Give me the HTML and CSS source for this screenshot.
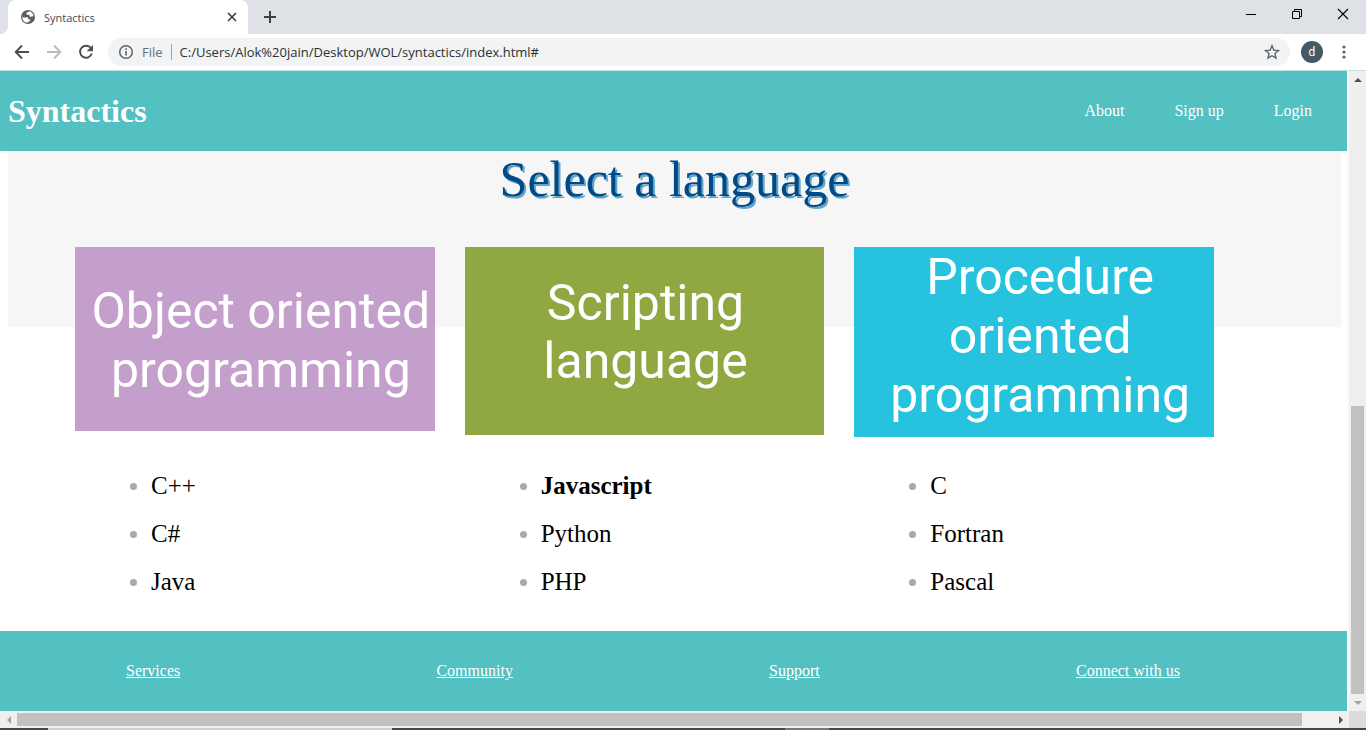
FILE: index.html
```html
<!DOCTYPE html>
<html lang="en">
<head>
<meta charset="utf-8">
<title>Syntactics</title>
<link rel="stylesheet" href="styles.css">
</head>
<body>
<div class="tab-strip">
  <div class="tab-edge"></div>
  <div class="tab">
    <svg class="favicon" viewBox="0 0 16 16" width="16" height="16" aria-hidden="true"><circle cx="8" cy="8" r="7" fill="#5b5f63"/><path d="M2.300 8.200c1.500-.3 2.600.6 4 .2 1.300-.3 2 .3 1.800 1.200-.2.900.9.700 1.700.9 1.200.4.500 1.500-.5 1.700-1 .2-.8 1.300-1.800 1.400C4.500 13.500 2.300 11.300 2.300 8.200zM9.300 2.300c-.9.700-1.300 1-2.300 1.300-1 .4-.7 1.500-.1 1.900.9.600 1.500-.5 2.200.1.700.7-.2 1.700 1.100 2.100 1.200.3 1.800-.6 3.500-.3C13.400 4.700 11.800 2.800 9.300 2.300z" fill="#fff"/></svg>
    <span class="tab-title">Syntactics</span>
    <button class="icon-button tab-close" aria-label="Close tab"><svg viewBox="0 0 16 16" width="16" height="16"><path d="M4 4l8 8M12 4l-8 8" stroke="#3c4043" stroke-width="1.700" fill="none"/></svg></button>
  </div>
  <button class="icon-button new-tab" aria-label="New tab"><svg viewBox="0 0 16 16" width="16" height="16"><path d="M8 2v12M2 8h12" stroke="#3c4043" stroke-width="2" fill="none"/></svg></button>
  <div class="window-controls">
    <button class="icon-button" aria-label="Minimize"><svg viewBox="0 0 12 12" width="12" height="12"><path d="M1 6.500h10" stroke="#000" fill="none"/></svg></button>
    <button class="icon-button" aria-label="Restore"><svg viewBox="0 0 12 12" width="12" height="12"><path d="M1.500 3.500h7v7h-7zM3.500 3.500v-2h7v7h-2" stroke="#000" fill="none"/></svg></button>
    <button class="icon-button" aria-label="Close"><svg viewBox="0 0 12 12" width="12" height="12"><path d="M1 1l10 10M11 1L1 11" stroke="#000" stroke-width="1.100" fill="none"/></svg></button>
  </div>
</div>
<div class="toolbar">
  <button class="icon-button" aria-label="Back"><svg viewBox="0 0 16 16" width="16" height="16"><path d="M15 8H2M8 1.500L1.700 8 8 14.500" stroke="#4a4e51" stroke-width="1.900" fill="none"/></svg></button>
  <button class="icon-button" aria-label="Forward"><svg viewBox="0 0 16 16" width="16" height="16"><path d="M1 8h13M8 1.500L14.300 8 8 14.500" stroke="#babcbe" stroke-width="1.900" fill="none"/></svg></button>
  <button class="icon-button" aria-label="Reload"><svg viewBox="0 0 16 16" width="16" height="16"><path d="M13 4.300A6 6 0 1 0 13.800 9.500" stroke="#4a4e51" stroke-width="1.900" fill="none"/><path d="M15 1v6.300H8.700z" fill="#4a4e51"/></svg></button>
  <div class="omnibox">
    <svg viewBox="0 0 16 16" width="16" height="16" aria-hidden="true"><circle cx="8" cy="8" r="6.300" stroke="#5f6368" stroke-width="1.500" fill="none"/><path d="M8 7v4.500M8 4.300v1.700" stroke="#5f6368" stroke-width="1.600"/></svg>
    <label class="scheme" for="address">File</label>
    <input class="address" id="address" type="text" value="C:/Users/Alok%20jain/Desktop/WOL/syntactics/index.html#">
    <button class="icon-button" aria-label="Bookmark"><svg viewBox="0 0 16 16" width="16" height="16"><path d="M8 1.800l1.800 4.300 4.700.4-3.600 3 1.100 4.600L8 11.700l-4 2.400 1.100-4.600-3.600-3 4.700-.4z" stroke="#5f6368" stroke-width="1.400" fill="none"/></svg></button>
  </div>
  <button class="avatar" aria-label="Profile d">d</button>
  <button class="icon-button" aria-label="Menu"><svg viewBox="0 0 16 16" width="16" height="16"><g fill="#5f6368"><circle cx="8" cy="3" r="1.600"/><circle cx="8" cy="8" r="1.600"/><circle cx="8" cy="13" r="1.600"/></g></svg></button>
</div>
<div class="viewport">
  <div class="page">
    <header class="site-header">
      <h1 class="brand">Syntactics</h1>
      <nav class="site-nav">
        <a href="#">About</a>
        <a href="#">Sign up</a>
        <a href="#">Login</a>
      </nav>
    </header>
    <main class="content">
      <h2 class="title">Select a language</h2>
      <div class="languages">
        <div class="card card-object">Object oriented programming</div>
        <div class="card card-script">Scripting<br>language</div>
        <div class="card card-procedure">Procedure oriented programming</div>
        <ul class="list"><li>C++</li><li>C#</li><li>Java</li></ul>
        <ul class="list"><li><b>Javascript</b></li><li>Python</li><li>PHP</li></ul>
        <ul class="list"><li>C</li><li>Fortran</li><li>Pascal</li></ul>
      </div>
    </main>
    <footer class="site-footer">
      <a href="#">Services</a>
      <a href="#">Community</a>
      <a href="#">Support</a>
      <a href="#">Connect with us</a>
    </footer>
  </div>
  <div class="scroll-y">
    <button class="icon-button arrow" aria-label="Scroll up"><svg viewBox="0 0 8 4" width="8" height="4"><path d="M0 4l4-4 4 4z" fill="#505050"/></svg></button>
    <div class="track-y"><div class="thumb-y"></div></div>
    <button class="icon-button arrow" aria-label="Scroll down"><svg viewBox="0 0 8 4" width="8" height="4"><path d="M0 0l4 4 4-4z" fill="#a3a3a3"/></svg></button>
  </div>
</div>
<div class="scroll-x">
  <button class="icon-button arrow" aria-label="Scroll left"><svg viewBox="0 0 4 8" width="4" height="8"><path d="M4 0L0 4l4 4z" fill="#a3a3a3"/></svg></button>
  <div class="track-x"><div class="thumb-x"></div></div>
  <button class="icon-button arrow" aria-label="Scroll right"><svg viewBox="0 0 4 8" width="4" height="8"><path d="M0 0l4 4-4 4z" fill="#505050"/></svg></button>
  <div class="corner"></div>
</div>
<div class="taskbar-edge"></div>
</body>
</html>
```
FILE: styles.css
```css
* { box-sizing: border-box; }

body {
  margin: 0;
  min-height: 100vh;
  display: flex;
  flex-direction: column;
  background: #fff;
  font-family: "Open Sans", "Noto Sans", sans-serif;
}

.icon-button {
  display: flex;
  align-items: center;
  justify-content: center;
  flex: none;
  margin: 0;
  padding: 0;
  border: 0;
  background: none;
}

/* Browser window */
.tab-strip {
  display: flex;
  height: 34px;
  background: #dee1e6;
}

.tab-edge {
  width: 8px;
  background: #fff;
}

.tab-edge::before {
  content: "";
  display: block;
  height: 34px;
  border-bottom-right-radius: 8px;
  background: #dee1e6;
}

.tab {
  display: flex;
  align-items: center;
  gap: 8px;
  width: 240px;
  padding: 0 8px 0 12px;
  border-radius: 8px 8px 0 0;
  background: #fff;
}

.tab-title {
  flex: 1;
  font-size: 11px;
  color: #45494d;
}

.new-tab { width: 44px; }

.window-controls {
  display: flex;
  height: 28px;
  margin-left: auto;
}

.window-controls .icon-button { width: 46px; }

.toolbar {
  display: flex;
  align-items: center;
  gap: 16px;
  height: 37px;
  padding: 0 14px;
  border-bottom: 1px solid #c4e3e3;
}

.omnibox {
  display: flex;
  align-items: center;
  flex: 1;
  height: 28px;
  margin: 0 -5px 0 -2px;
  padding: 0 10px;
  border-radius: 14px;
  background: #f1f3f4;
}

.scheme {
  margin-left: 8px;
  padding-right: 8px;
  border-right: 1px solid #9aa0a6;
  font-size: 13px;
  line-height: 16px;
  color: #6b6f74;
}

.address {
  flex: 1;
  min-width: 0;
  padding: 0 8px;
  border: 0;
  background: none;
  font-family: inherit;
  font-size: 13px;
  color: #2d3033;
}

.avatar {
  width: 22px;
  height: 22px;
  padding: 0;
  border: 0;
  border-radius: 50%;
  background: #455a64;
  color: #fff;
  font-family: Roboto, sans-serif;
  font-size: 12px;
}

.toolbar > .icon-button:last-child { margin: 0 0 0 -3px; }

/* Site */
.viewport {
  display: flex;
  flex: 1;
}

.page {
  display: flex;
  flex-direction: column;
  flex: 1;
  min-width: 0;
  font-family: "Liberation Serif", "Times New Roman", serif;
}

.site-header,
.site-footer {
  display: flex;
  align-items: center;
  justify-content: space-between;
  height: 80px;
  background: #53c0c2;
  font-size: 16px;
}

.site-header { padding: 0 35px 0 8px; }
.site-footer { padding: 0 167px 0 126px; }
.site-header a,
.site-footer a { color: #fff; }
.site-header a { text-decoration: none; }

.brand {
  margin: 0;
  font-size: 32px;
  color: #fff;
}

.site-nav {
  display: flex;
  gap: 50px;
}

.content {
  flex: 1;
  padding: 0 6px 0 8px;
  background: linear-gradient(#f6f6f6, #f6f6f6) content-box no-repeat 0 0 / 100% 176px;
}

.title {
  margin: 0 0 40px;
  font-size: 50px;
  font-weight: 400;
  line-height: 56px;
  text-align: center;
  color: #004b87;
  text-shadow: 2px 2px 0 #62a5c8;
}

.languages {
  display: grid;
  grid-template-columns: repeat(3, 1fr);
  column-gap: 30px;
  row-gap: 25px;
  align-items: start;
  padding: 0 127px 0 67px;
}

.card {
  font-family: Roboto, sans-serif;
  font-size: 50px;
  line-height: 59px;
  text-align: center;
  color: #fff;
}

.card-object {
  min-height: 184px;
  padding: 35px 0 0 12px;
  background: #c49fcb;
}

.card-script {
  min-height: 188px;
  padding: 27px 0 0 2px;
  line-height: 58px;
  background: #8fa842;
}

.card-procedure {
  min-height: 190px;
  padding: 1px 0 0 12px;
  background: #27c3de;
}

.list {
  margin: 0 0 25px;
  padding: 0 0 0 55px;
  list-style: none;
  font-size: 25px;
  line-height: 48px;
  color: #000;
}

.list li {
  display: flex;
  align-items: center;
  gap: 14px;
}

.list li::before {
  content: "";
  width: 7px;
  height: 7px;
  border-radius: 50%;
  background: #a9a9a9;
}

/* Scroll bars */
.scroll-y {
  display: flex;
  flex-direction: column;
  width: 19px;
  border-left: 2px solid #fafafa;
  background: #efefef;
}

.scroll-y .arrow { height: 17px; }

.track-y {
  display: flex;
  flex-direction: column;
  justify-content: flex-end;
  flex: 1;
}

.thumb-y {
  height: 47.5%;
  margin: 0 2px;
  background: #c1c1c1;
}

.scroll-x {
  display: flex;
  height: 17px;
  background: #f0f0f0;
}

.scroll-x .arrow { width: 17px; }

.track-x {
  flex: 1;
  padding: 2px 0;
}

.thumb-x {
  width: 97.7%;
  height: 13px;
  background: #c1c1c1;
}

.corner {
  width: 17px;
  background: #dcdcdc;
}

.taskbar-edge {
  height: 2px;
  background: linear-gradient(90deg, #474547 48px, #d0d0d0 48px 392px, #474547 392px 785px, #777 785px 829px, #474547 829px);
}
```
